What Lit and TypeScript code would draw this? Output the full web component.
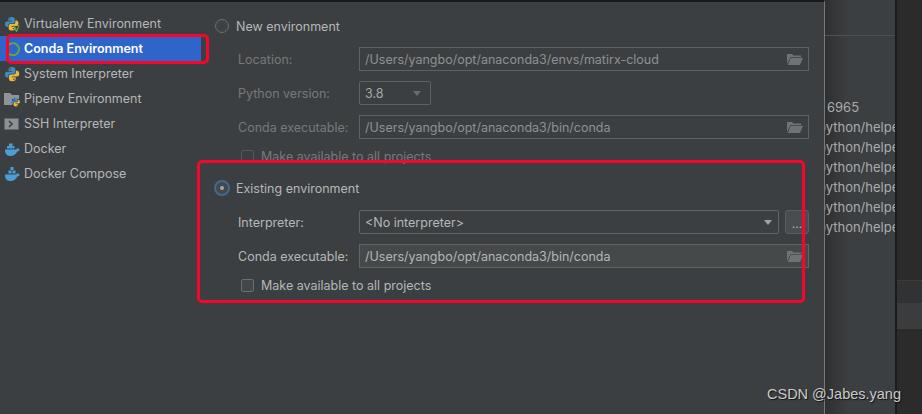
import { LitElement, html, css, svg } from "lit";
import { customElement } from "lit/decorators.js";

const py = (x = 0, y = 0, s = 1) => svg`<g transform="translate(${x} ${y}) scale(${s})">
  <path d="M8 1C5 1 4.5 2 4.5 3.5V5H8.2v.7H3C1.500 5.700 1 7 1 8.500S1.700 11.500 3 11.500h1.300V9.800C4.300 8.500 5.300 7.800 6.500 7.800h3c1 0 1.800-.8 1.800-1.800V3.200C11.300 1.800 10 1 8 1z" fill="#3f8cc4"/>
  <path d="M8.200 15.300c3 0 3.500-1 3.500-2.500v-1.500H8v-.7h5.200c1.500 0 2-1.300 2-2.800s-.7-3-2-3h-1.300V6.500c0 1.300-1 2-2.200 2h-3C5.700 8.500 4.900 9.300 4.900 10.300v2.800c0 1.400 1.300 2.200 3.300 2.200z" fill="#e8b93a"/>
  <circle cx="6.200" cy="3" r=".7" fill="#3c3f41"/><circle cx="10" cy="13.300" r=".7" fill="#3c3f41"/></g>`;

const whale = (compose: boolean) => svg`
  <g fill="#4a9fd8">
    ${compose ? svg`<rect x="6.500" y="1" width="3" height="3"/><rect x="4.500" y="4.500" width="3" height="3"/><rect x="8.500" y="4.500" width="3" height="3"/>`
      : svg`<rect x="5" y="2.500" width="3.500" height="5"/><rect x="3" y="5" width="2" height="2.500"/><rect x="8.500" y="5" width="2" height="2.500"/>`}
    <path d="M1 8.500h11.300c.4-1 1.300-1.500 2.200-1.300.3.400.3 1 .1 1.400.5 0 1 0 1.400.2-.7 1.200-1.700 1.600-2.700 1.600C12.300 13 9.700 15 6 15 2.500 15 .8 12 1 8.500z"/>
  </g>`;

const icons = [
  svg`${py(0, 0, 0.95)}<path d="M10 9.500l2.500 6 2.500-6" fill="none" stroke="#5fa83a" stroke-width="1.300"/>`,
  svg`<path d="M9 2.200a6 6 0 1 1-.1 0" fill="none" stroke="#62a83c" stroke-width="1.800" transform="translate(0 0)"/><path d="M4 3.500a6 6 0 0 0 0 9" fill="none" stroke="#2f65ca" stroke-width="2"/>`,
  py(0, 0, 1),
  svg`<path d="M0 2h6l2 2h7v4H8v6H0z" fill="#8e9498"/>${py(6.500, 6, 0.62)}`,
  svg`<rect x="0.500" y="2.500" width="14" height="11" fill="#8b9195"/><path d="M5 5l3 3-3 3" fill="none" stroke="#3c3f41" stroke-width="1.600"/>`,
  whale(false),
  whale(true),
];

const labels = ["Virtualenv Environment", "Conda Environment", "System Interpreter", "Pipenv Environment", "SSH Interpreter", "Docker", "Docker Compose"];

const folder = svg`<svg class="folder" width="16" height="12" viewBox="0 0 16 12"><path d="M0 1h5l1.500 1.500H14V4H3.500L0 11z" fill="currentColor"/><path d="M3.800 4.700H16L13 12H.8z" fill="currentColor"/></svg>`;

@customElement("app-root")
export class AppRoot extends LitElement {
  static styles = css`
    :host { display: flex; width: 922px; height: 414px; position: relative; overflow: hidden; background: #2b2b2b;
      font-family: Inter, "Liberation Sans", sans-serif; font-size: 12.500px; color: #b4b7b9; }
    .dialog { width: 825px; flex: none; height: 414px; box-sizing: border-box; background: #3c3f41; border-top: 2px solid #1a1a1a; border-right: 1px solid #77797b; display: flex; }
    .side { width: 201px; flex: none; padding-top: 9px; }
    .item { height: 25px; display: flex; align-items: center; gap: 4px; padding-left: 4px; box-sizing: border-box; white-space: nowrap; }
    .item.sel { background: #2f65ca; color: #fff; font-weight: 600; }
    .item svg { flex: none; }
    .form { flex: 1; padding: 12px 15px 0 14px; box-sizing: border-box; }
    .radio-row { height: 24px; display: flex; align-items: center; gap: 7px; }
    .radio { width: 14px; height: 14px; box-sizing: border-box; border-radius: 50%; border: 1px solid #6b6e70; background: #3f4244; flex: none; }
    .radio.on { width: 16px; height: 16px; margin: 0 -1px; border: 2.500px solid #44698f; background: #45484a; display: flex; align-items: center; justify-content: center; }
    .radio.on::after { content: ""; width: 4px; height: 4px; border-radius: 50%; background: #a5a8aa; }
    .group { padding-left: 23px; }
    .row { display: grid; grid-template-columns: 121px 1fr; align-items: center; height: 24px; margin-top: 10px; }
    .field { height: 24px; box-sizing: border-box; border: 1px solid #5e6163; display: flex; align-items: center; justify-content: space-between; padding: 0 5px; color: #8e9193; background: #3c3f41; }
    .dim .label { color: #77797b; }
    .live .field { color: #b4b7b9; background: #45494a; border-color: #646464; }
    .folder { color: #6f7376; }
    .small { width: 72px; border-radius: 2px; }
    .small span:first-child { color: #a5a8aa; }
    .caret { width: 0; height: 0; border: 4.500px solid transparent; border-top: 5px solid #6a6d6f; border-bottom: 0; margin-right: 4px; }
    .split { display: flex; gap: 6px; }
    .combo { flex: 1; border-radius: 2px; background: #3c3f41 !important; }
    .combo .caret { border-top-color: #a0a3a5; margin-right: 1px; }
    .dots { width: 24px; height: 24px; box-sizing: border-box; border: 1px solid #5a5d5f; border-radius: 3px; background: #4a4d4f; color: #b4b7b9; text-align: center; line-height: 26px; font-size: 12px; }
    .check-row { display: flex; align-items: center; gap: 7px; height: 20px; margin: 7px 0 0 3px; }
    .check { width: 13px; height: 13px; box-sizing: border-box; border: 1px solid #6b6e70; border-radius: 2px; background: #43474a; }
    .dim .check-row { color: #77797b; }
    .dim .check { background: #3c3f41; border-color: #55585a; }
    .spacer { height: 10px; }
    .mark { position: absolute; box-sizing: border-box; border: 3px solid #f6062b; border-radius: 5px; }
    .m1 { left: 6px; top: 34px; width: 203px; height: 30px; }
    .m2 { left: 197px; top: 160px; width: 608px; height: 143px; }
    .back { width: 72px; flex: none; background: linear-gradient(90deg, #2f3031, #3c3f41 35%); box-sizing: border-box; border-right: 2px solid #1b1b1b; overflow: hidden; }
    .back-top { height: 35px; border-bottom: 1px solid #4d5052; }
    .log { padding-top: 61px; font-size: 13px; line-height: 20px; color: #a9acae; white-space: nowrap; }
    .log div { margin-left: -7px; }
    .log div:first-child { margin-left: 2px; }
    .right { flex: 1; background: #2b2b2b; display: flex; flex-direction: column; padding-top: 280px; }
    .r1 { height: 23px; background: #303233; border-top: 1px solid #3b3b3b; box-sizing: border-box; }
    .r2 { height: 26px; background: #3a3c3e; }
    .wm { position: absolute; left: 767px; top: 386px; font: 14.500px "Liberation Sans", sans-serif; color: #c9cbcc; text-shadow: 1px 1px 1px #111; white-space: nowrap; }
  `;

  render() {
    return html`
      <div class="dialog">
        <div class="side">
          ${labels.map((l, i) => html`<div class="item ${i === 1 ? "sel" : ""}"><svg width="16" height="16" viewBox="0 0 16 16">${icons[i]}</svg><span>${l}</span></div>`)}
        </div>
        <div class="form">
          <div class="radio-row dim"><span class="radio"></span><span>New environment</span></div>
          <div class="group dim">
            <div class="row" style="margin-top:9px"><span class="label">Location:</span><div class="field"><span>/Users/yangbo/opt/anaconda3/envs/matirx-cloud</span>${folder}</div></div>
            <div class="row"><span class="label">Python version:</span><div class="field small"><span>3.8</span><span class="caret"></span></div></div>
            <div class="row"><span class="label">Conda executable:</span><div class="field"><span>/Users/yangbo/opt/anaconda3/bin/conda</span>${folder}</div></div>
            <div class="check-row"><span class="check"></span><span>Make available to all projects</span></div>
          </div>
          <div class="spacer"></div>
          <div class="radio-row"><span class="radio on"></span><span>Existing environment</span></div>
          <div class="group live">
            <div class="row"><span class="label">Interpreter:</span><div class="split"><div class="field combo"><span>&lt;No interpreter&gt;</span><span class="caret"></span></div><div class="dots">...</div></div></div>
            <div class="row"><span class="label">Conda executable:</span><div class="field"><span>/Users/yangbo/opt/anaconda3/bin/conda</span>${folder}</div></div>
            <div class="check-row"><span class="check"></span><span>Make available to all projects</span></div>
          </div>
        </div>
      </div>
      <div class="back">
        <div class="back-top"></div>
        <div class="log">
          <div>6965</div>
          ${[0, 1, 2, 3, 4, 5].map(() => html`<div>python/helpers</div>`)}
        </div>
      </div>
      <div class="right"><div class="r1"></div><div class="r2"></div></div>
      <div class="mark m1"></div>
      <div class="mark m2"></div>
      <div class="wm">CSDN @Jabes.yang</div>
    `;
  }
}
